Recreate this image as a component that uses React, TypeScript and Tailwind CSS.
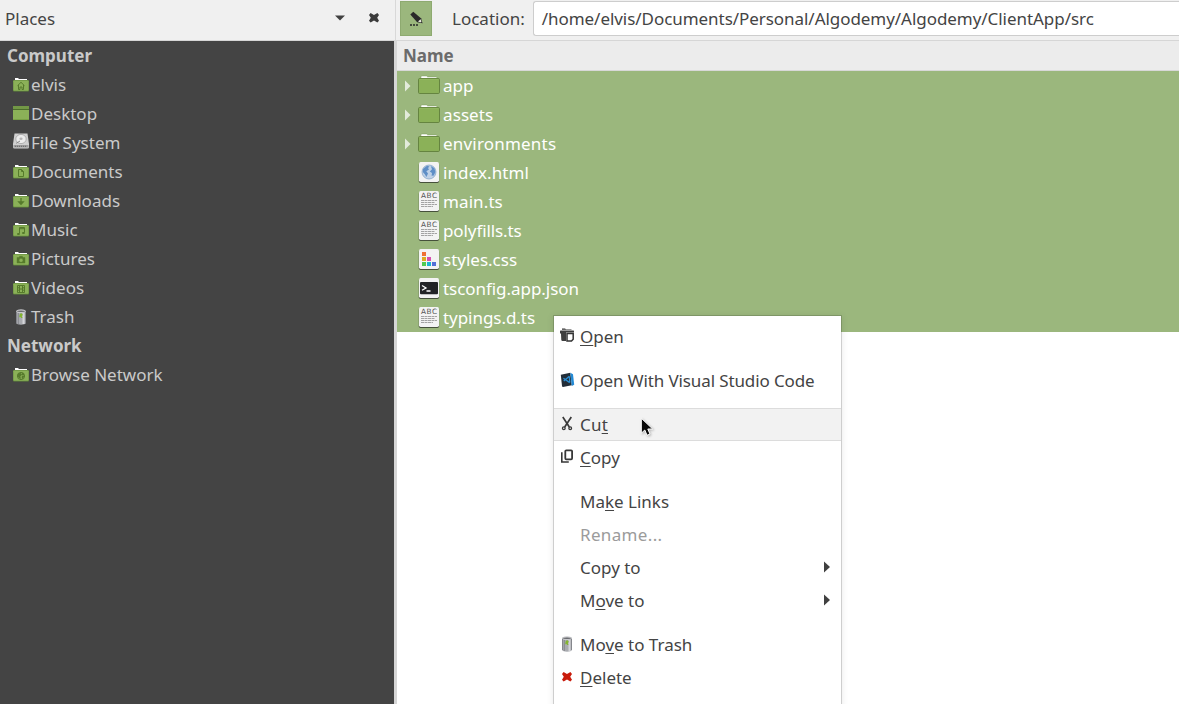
import type { ReactNode } from "react";

type PlaceKind = "home" | "desktop" | "disk" | "document" | "download" | "music" | "picture" | "video" | "trash" | "network";
type FileKind = "folder" | "html" | "text" | "css" | "json";

const computerPlaces: { label: string; kind: PlaceKind }[] = [
  { label: "elvis", kind: "home" },
  { label: "Desktop", kind: "desktop" },
  { label: "File System", kind: "disk" },
  { label: "Documents", kind: "document" },
  { label: "Downloads", kind: "download" },
  { label: "Music", kind: "music" },
  { label: "Pictures", kind: "picture" },
  { label: "Videos", kind: "video" },
  { label: "Trash", kind: "trash" },
];

const files: { name: string; kind: FileKind; tracking?: string }[] = [
  { name: "app", kind: "folder" },
  { name: "assets", kind: "folder", tracking: "tracking-[0.1px]" },
  { name: "environments", kind: "folder", tracking: "tracking-[0.2px]" },
  { name: "index.html", kind: "html", tracking: "tracking-[0.1px]" },
  { name: "main.ts", kind: "text", tracking: "tracking-[0.1px]" },
  { name: "polyfills.ts", kind: "text", tracking: "tracking-[-0.1px]" },
  { name: "styles.css", kind: "css" },
  { name: "tsconfig.app.json", kind: "json", tracking: "tracking-[-0.05px]" },
  { name: "typings.d.ts", kind: "text", tracking: "tracking-[-0.05px]" },
];

function TrashIcon() {
  return (
    <svg width="16" height="16" viewBox="0 0 16 16" className="shrink-0">
      <path d="M3 2.5Q3 .5 8 .5T13 2.5V14Q12 15.7 8 15.7T3 14Z" fill="#a9abb0" />
      <path d="M3.5 3V14M5.3 4V15" stroke="#85878c" strokeWidth="1" />
      <path d="M10.5 4V15" stroke="#d4d5d9" strokeWidth="2" />
      <path d="M12.5 3V14" stroke="#85878c" strokeWidth="1" />
      <ellipse cx="8" cy="2.3" rx="4.3" ry="1.3" fill="#6a6c70" stroke="#dddddf" strokeWidth=".8" />
      <path d="M8 4L9.8 5.5 8.8 7.5 9.6 9H8.2L7.3 7.7 6.2 8.6 6.6 5.5Z" fill="#83b52f" />
    </svg>
  );
}

function PlaceGlyph({ kind }: { kind: PlaceKind }) {
  switch (kind) {
    case "home":
      return <path d="M4.5 8.7L8 5.3 11.5 8.7M5.5 8V12.5H7V10H9V12.5H10.5V8" />;
    case "document":
      return <path d="M5.5 5.5H8.5L10.5 7.5V12.5H5.5ZM8.5 5.5V7.5H10.5" />;
    case "download":
      return <path d="M8 5V10M5.8 9H10.2L8 11.3Z" fill="#567a2c" strokeWidth="1.3" />;
    case "music":
      return <path d="M6.5 11.5V5.5H11.5V10.5M6.5 6.7H11.5M4.5 11.5H6.4V12.5H4.5ZM9.5 10.5H11.4V11.5H9.5Z" />;
    case "picture":
      return <path d="M4 6.5H6L6.7 5.3H9.3L10 6.5H12V12H4ZM8 7.3A2 2 0 1 0 8 11.3 2 2 0 1 0 8 7.3Z" fill="#567a2c" fillRule="evenodd" strokeWidth=".4" />;
    case "video":
      return <path d="M4.5 5.5H11.5V12.5H4.5ZM6.5 5.5V12.5M9.5 5.5V12.5M4.5 7.8H6.3M4.5 10.2H6.3M9.7 7.8H11.5M9.7 10.2H11.5M6.3 9H9.7" />;
    case "network":
      return (
        <>
          <circle cx="8" cy="9" r="3.6" />
          <path d="M5 7L7.6 6.4 8.5 8 6.8 9.2 7.3 11.4 5.4 10ZM9.3 6L11 7.5 9.7 8.2ZM9 9.6L10.8 9.2 9.4 11.5Z" fill="#567a2c" />
        </>
      );
    default:
      return null;
  }
}

function PlaceIcon({ kind }: { kind: PlaceKind }) {
  if (kind === "trash") return <TrashIcon />;
  if (kind === "desktop")
    return (
      <svg width="16" height="16" viewBox="0 0 16 16" className="shrink-0">
        <rect y="0" width="16" height="14" rx=".7" fill="#8bb158" />
        <rect y="0" width="16" height="3" fill="#729746" />
        <rect y="3" width="16" height="1" fill="#4b6c2b" />
        <rect y="13" width="16" height="1" fill="#78a045" />
      </svg>
    );
  if (kind === "disk")
    return (
      <svg width="16" height="16" viewBox="0 0 16 16" className="mb-1 shrink-0">
        <path d="M1.5 .5H14.5L16 11V14Q16 15.5 14.5 15.5H1.5Q0 15.5 0 14V11Z" fill="#d0d0d0" />
        <path d="M.5 12H15.5V14.5H.5Z" fill="#9c9c9c" />
        <path d="M2 13.3H13" stroke="#666" strokeDasharray="1 1" />
        <ellipse cx="8" cy="6" rx="5.2" ry="4.6" fill="#ececec" stroke="#a5a5a5" strokeWidth=".8" />
        <ellipse cx="8" cy="5.8" rx="1.6" ry="1.3" fill="#b5b5b5" />
        <path d="M3.2 10.3L7 8" stroke="#888" />
      </svg>
    );
  return (
    <svg width="16" height="16" viewBox="0 0 16 16" className="shrink-0">
      <path d="M2 3V1H5L6 2H14V4H2Z" fill="#fff" />
      <rect y="3" width="16" height="11.4" rx="1" fill="#5f843a" />
      <rect x=".4" y="3.4" width="15.2" height="10.3" rx=".8" fill="#8bb158" />
      <g fill="none" stroke="#567a2c" strokeWidth="1"><PlaceGlyph kind={kind} /></g>
    </svg>
  );
}

function FileIcon({ kind }: { kind: FileKind }) {
  if (kind === "folder")
    return (
      <svg width="22" height="22" viewBox="0 0 22 22" className="mt-[3px] shrink-0 self-start">
        <path d="M3 5V2.8Q3 2 4 2H8.5L9.7 3H18Q19 3 19 4V6H3Z" fill="#fff" stroke="#718d50" strokeWidth=".4" />
        <rect x=".5" y="4.5" width="21" height="15" rx="1.2" fill="#8bb158" stroke="#658440" />
        <path d="M1.5 5.3H20.5" stroke="#98bd69" strokeWidth=".6" />
      </svg>
    );
  return (
    <svg width="22" height="23" viewBox="0 0 22 23" className="mt-[3px] shrink-0 self-start">
      <rect x=".8" y="2" width="20.3" height="20" rx="1.8" fill="#46513b" />
      <rect x="1" y="1" width="20" height="20" rx="1.7" fill="#f3f3f3" />
      {kind === "html" && (
        <>
          <circle cx="11" cy="11" r="7" fill="#bfd1e6" stroke="#7c9fc6" strokeWidth=".7" />
          <path d="M5 8L9 4.8 11.5 5.5 10 7 11 8.4 8.3 10.2 10 12.4 8.4 16 6.8 13.3 4.8 11ZM12.8 5L16.4 7.2 17.4 11 15.8 14.4 13.6 14.8 14 12 11.8 10.5 14 8.3Z" fill="#5e8ec6" />
        </>
      )}
      {kind === "text" && (
        <>
          <text x="3" y="8" fontSize="7.3" textLength="16" fill="#555" fontFamily="DejaVu Sans, sans-serif">ABC</text>
          <path d="M3 10.5H19M3 12.5H17M3 14.5H19M3 16.5H15" stroke="#9a9a9a" strokeWidth=".9" strokeDasharray="3 .5" />
        </>
      )}
      {kind === "css" && (
        <>
          <rect x="4" y="4" width="4" height="4" fill="#ef7034" />
          <rect x="4" y="9" width="4" height="4" fill="#e0a91f" />
          <rect x="9" y="9" width="4" height="4" fill="#d44fae" />
          <rect x="4" y="14" width="4" height="4" fill="#50ca52" />
          <rect x="9" y="14" width="4" height="4" fill="#19b6d0" />
          <rect x="14" y="14" width="4" height="4" fill="#536fd8" />
        </>
      )}
      {kind === "json" && (
        <>
          <rect x="2" y="5" width="18" height="12.3" rx="1" fill="#222326" />
          <path d="M4 8.5L8 11 4 13.3M8.5 14H12.5" fill="none" stroke="#fff" strokeWidth="1.3" />
        </>
      )}
    </svg>
  );
}

function PlaceRow({ label, kind }: { label: string; kind: PlaceKind }) {
  return (
    <div className="flex h-[29px] items-center gap-0.5 pl-[13px]">
      <PlaceIcon kind={kind} />
      <span className="leading-[29px]">{label}</span>
    </div>
  );
}

function FileRow({ name, kind, tracking = "" }: { name: string; kind: FileKind; tracking?: string }) {
  return (
    <div className="flex h-[29px] items-center bg-[#9bb77d] pl-2 text-white">
      <svg width="13" height="12" viewBox="0 0 13 12" className="shrink-0">
        {kind === "folder" && <path d="M0 .5L5.5 6 0 11.5Z" fill="#e3ebdb" />}
      </svg>
      <FileIcon kind={kind} />
      <span className={`pl-[3px] leading-[29px] ${tracking}`}>{name}</span>
    </div>
  );
}

function Mnemonic({ children }: { children: ReactNode }) {
  return <span className="underline decoration-1 underline-offset-2">{children}</span>;
}

function MenuItem({ icon, children, active, disabled, submenu }: { icon?: ReactNode; children: ReactNode; active?: boolean; disabled?: boolean; submenu?: boolean }) {
  return (
    <div className={`flex h-[33px] shrink-0 items-center border-y pl-[5px] ${active ? "border-[#dcdcdc] bg-[#f2f2f2]" : "border-transparent"} ${disabled ? "text-[#9b9b9b]" : "text-[#444]"}`}>
      <span className="flex w-[21px] shrink-0 items-center">{icon}</span>
      <span className="grow leading-[31px]">{children}</span>
      {submenu && (
        <svg width="6" height="12" viewBox="0 0 6 12" className="mb-[2px] mr-[11px]"><path d="M0 .5L6 6 0 11.5Z" fill="#404040" /></svg>
      )}
    </div>
  );
}

const OpenIcon = () => (
  <svg width="16" height="16" viewBox="0 0 16 16" className="mb-px">
    <path d="M3 1.8V.6H6L7 1.2H12.5V1.8Z" fill="#333" />
    <path d="M1 3Q1 2.4 1.6 2.4H14.5Q15 2.4 15 3V4.6H7V13H3.5Q2.5 13 2.3 12L2 6 1 5Z" fill="#3e3e3e" />
    <path d="M8 5.4H14.2V11.2L12.5 13H8Z" fill="#fff" stroke="#333" strokeWidth="1.5" />
  </svg>
);

const CodeIcon = () => (
  <svg width="16" height="16" viewBox="0 0 16 16" className="mb-px">
    <path d="M1.8 2.7L11.3 .8 12.8 13.3 4 15Q3.2 15 3 14Z" fill="#222d38" />
    <path d="M11.3 .8L14 2.2 15.2 12.8 12.8 14Z" fill="#238ad5" />
    <path d="M10.3 4.2L4.8 9M4.4 6.3L10.8 10.6M10.3 4.2L10.8 10.6" stroke="#2b8dd2" strokeWidth="1.3" fill="none" />
  </svg>
);

const CutIcon = () => (
  <svg width="16" height="16" viewBox="0 0 16 16" fill="none" stroke="#393939" className="mb-px">
    <path d="M3.8 1L10.3 11M12.3 1L5.7 11" strokeWidth="1.7" />
    <circle cx="4.8" cy="12.2" r="1.35" strokeWidth="1.3" />
    <circle cx="11.2" cy="12.2" r="1.35" strokeWidth="1.3" />
  </svg>
);

const CopyIcon = () => (
  <svg width="16" height="16" viewBox="0 0 16 16" fill="none" stroke="#373737" strokeWidth="1.8" className="mb-px">
    <rect x="6.3" y="1.3" width="6.8" height="9" rx="1" />
    <path d="M2.8 3.3V13H9.8" strokeWidth="1.6" />
  </svg>
);

const CrossIcon = ({ color }: { color: string }) => (
  <svg width="16" height="16" viewBox="0 0 16 16">
    <path d="M4.6 3L8 5 11.4 3 13 5 11.2 7.7 13 10.7 11.4 12.4 8 10.5 4.6 12.4 3 10.7 4.8 7.7 3 5Z" fill={color} />
  </svg>
);

const Gap = () => <div className="h-[11px] shrink-0" />;

function ContextMenu() {
  return (
    <div className="absolute left-[553px] top-[315px] flex h-[400px] w-[289px] flex-col border border-black/15 bg-white bg-clip-padding pt-1 shadow-[0_1px_7px_rgba(0,0,0,0.09)]">
      <MenuItem icon={<OpenIcon />}><Mnemonic>O</Mnemonic>pen</MenuItem>
      <Gap />
      <MenuItem icon={<CodeIcon />}><span className="tracking-[-0.11px]">Open With Visual Studio Code</span></MenuItem>
      <Gap />
      <MenuItem icon={<CutIcon />} active><span className="tracking-[0.2px]">Cu<Mnemonic>t</Mnemonic></span></MenuItem>
      <MenuItem icon={<CopyIcon />}><Mnemonic>C</Mnemonic>opy</MenuItem>
      <Gap />
      <MenuItem>Ma<Mnemonic>k</Mnemonic>e Links</MenuItem>
      <MenuItem disabled><span className="tracking-[0.35px]">Rename...</span></MenuItem>
      <MenuItem submenu>Copy to</MenuItem>
      <MenuItem submenu>M<Mnemonic>o</Mnemonic>ve to</MenuItem>
      <Gap />
      <MenuItem icon={<span className="mb-0.5"><TrashIcon /></span>}>Mo<Mnemonic>v</Mnemonic>e to Trash</MenuItem>
      <MenuItem icon={<span className="mb-px"><CrossIcon color="#c91b0b" /></span>}><Mnemonic>D</Mnemonic>elete</MenuItem>
    </div>
  );
}

export default function App() {
  return (
    <div className="relative flex h-[704px] w-[1179px] overflow-hidden bg-white font-['Noto_Sans',sans-serif] text-[17px] text-[#444]">
      <aside className="flex w-[394px] shrink-0 flex-col bg-[#444]">
        <header className="flex h-[41px] shrink-0 items-center border-b border-[#d6d6d6] bg-[#f0f0f0] pl-[5px]">
          <span className="-mt-0.5 grow leading-[38px]">Places</span>
          <svg width="10" height="6" viewBox="0 0 10 6" className="-mt-1 mr-[21px]"><path d="M0 .5H10L5 5.5Z" fill="#404040" /></svg>
          <span className="-mt-1 mr-[12px]"><CrossIcon color="#3b3b3b" /></span>
        </header>
        <nav className="text-[#cacaca]">
          <h2 className="h-[29px] pl-[7px] font-bold leading-[29px]">Computer</h2>
          {computerPlaces.map((p) => <PlaceRow key={p.label} {...p} />)}
          <h2 className="h-[29px] pl-[7px] font-bold leading-[29px]">Network</h2>
          <PlaceRow label="Browse Network" kind="network" />
        </nav>
      </aside>
      <div className="flex w-[3px] shrink-0 flex-col bg-[#d6d6d6]">
        <div className="h-10 border-l border-[#f0f0f0] bg-[#f0f0f0]"><div className="h-10 w-px bg-[#d8d8d8]" /></div>
      </div>
      <main className="flex min-w-0 grow flex-col">
        <header className="flex h-[41px] shrink-0 items-start border-b border-[#d6d6d6] bg-[#f0f0f0] pl-[3px]">
          <button className="mt-px flex h-[35px] w-[32px] shrink-0 items-center justify-center border border-[#8eaa70] bg-[#9bb77d]">
            <svg width="16" height="18" viewBox="0 0 16 18">
              <path d="M2.3 4.6L5.3 1.8 13 8.3 14.5 13.3 9.2 12.3Z" fill="#292929" />
              <path d="M10 11.6L12.6 9.2 13.8 12.8Z" fill="#e8eadf" />
              <path d="M12.5 12.4L13.4 11.6 14.5 13.3Z" fill="#292929" />
              <path d="M2 14.9H4M5 14.9H7M8 14.9H10" stroke="#292929" strokeWidth="1.5" />
            </svg>
          </button>
          <span className="ml-5 leading-[38px]">Location:</span>
          <div className="-mr-px ml-2 mt-px h-[35px] grow whitespace-nowrap rounded-l-[3px] border border-r-0 border-[#cdcdcd] bg-white pl-2 leading-[34px] tracking-[-0.05px]">/home/elvis/Documents/Personal/Algodemy/Algodemy/ClientApp/src</div>
        </header>
        <div className="h-[30px] shrink-0 border-b border-[#d8d8d8] bg-[#ececec] pl-1.5 font-bold leading-[29px] text-[#6b6b6b]">Name</div>
        {files.map((f) => <FileRow key={f.name} {...f} />)}
      </main>
      <ContextMenu />
      <svg width="14" height="20" viewBox="0 0 14 20" className="absolute left-[640px] top-[417px] drop-shadow-[1px_1px_1px_rgba(0,0,0,0.25)]">
        <path d="M1.3 1.2V16.2L4.8 13 7 18.3 10 17 7.8 12H12.7Z" fill="#080808" stroke="#fff" strokeWidth="1" />
      </svg>
    </div>
  );
}
